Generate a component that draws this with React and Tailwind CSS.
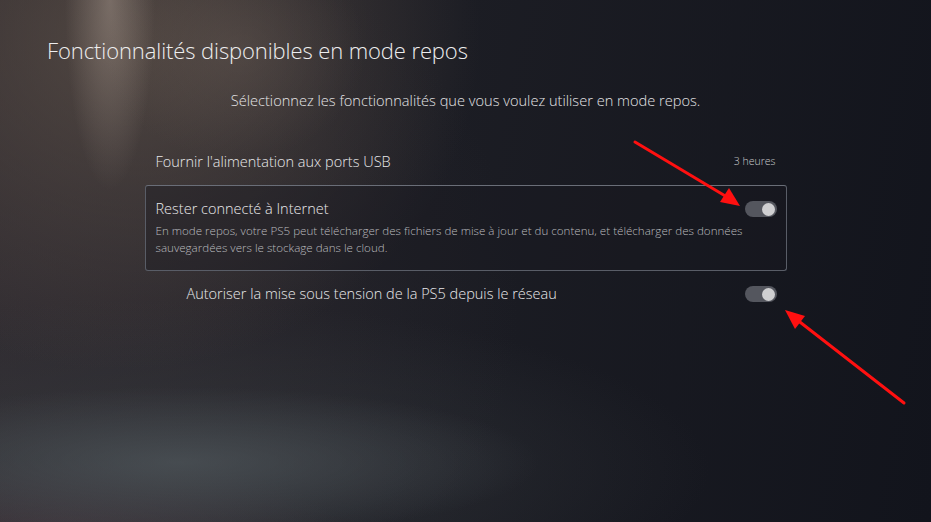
import React from "react";

function Toggle() {
  return (
    <div className="flex h-[16px] w-[32px] items-center justify-end rounded-full bg-[#54565e] pr-[2px]">
      <div className="h-[13px] w-[13px] rounded-full bg-[#cfcfd1]" />
    </div>
  );
}

export default function App() {
  return (
    <div
      className="relative h-[522px] w-[931px] overflow-hidden bg-[#13151d] text-[#e8e8ea] [font-family:'Open_Sans','Noto_Sans',sans-serif] bg-[radial-gradient(ellipse_45px_190px_at_110px_0px,rgba(165,150,140,0.5),transparent),radial-gradient(ellipse_130px_110px_at_235px_50px,rgba(110,96,88,0.35),transparent),radial-gradient(ellipse_360px_330px_at_120px_40px,rgba(92,80,72,0.75),transparent),radial-gradient(ellipse_360px_75px_at_180px_462px,rgba(84,92,97,0.6),transparent),radial-gradient(ellipse_560px_170px_at_150px_470px,rgba(56,60,64,0.65),transparent),radial-gradient(ellipse_280px_70px_at_60px_528px,rgba(88,62,72,0.55),transparent),radial-gradient(ellipse_520px_420px_at_0px_300px,rgba(55,50,55,0.6),transparent),linear-gradient(100deg,#29252a_0%,#1c1d24_45%,#12141c_100%)]"
    >
      <h1 className="pl-[47px] pt-[36px] text-[22px] font-light leading-[28px] tracking-[-0.1px] text-[#eeeeef]">
        Fonctionnalités disponibles en mode repos
      </h1>

      <p className="mt-[26px] text-center text-[14.6px] font-light leading-[20px] text-[#e4e4e6]">
        Sélectionnez les fonctionnalités que vous voulez utiliser en mode repos.
      </p>

      <div className="mx-auto mt-[33px] w-[642px]">
        <div className="flex h-[38px] items-center justify-between pl-[11px] pr-[11px]">
          <span className="text-[14.5px] font-light">Fournir l'alimentation aux ports USB</span>
          <span className="text-[10.5px] font-light text-[#c9c9cc]">3 heures</span>
        </div>

        <div className="mt-[4px] h-[86px] rounded-[3px] border border-[#595d67] border-t-[#6a6e78] bg-[#191a21]/40 pl-[10px] pr-[9px] pt-[13px]">
          <div className="flex items-center justify-between">
            <span className="text-[14.5px] font-light leading-[20px]">Rester connecté à Internet</span>
            <Toggle />
          </div>
          <p className="mt-[3px] pr-[20px] text-[11.6px] font-light leading-[17px] text-[#b9babe]">
            En mode repos, votre PS5 peut télécharger des fichiers de mise à jour et du contenu, et télécharger des données sauvegardées vers le stockage dans le cloud.
          </p>
        </div>

        <div className="flex h-[46px] items-center justify-between pl-[42px] pr-[10px]">
          <span className="text-[14.5px] font-light">Autoriser la mise sous tension de la PS5 depuis le réseau</span>
          <Toggle />
        </div>
      </div>

      <svg className="pointer-events-none absolute inset-0" width="931" height="522" viewBox="0 0 931 522">
        <line x1="635" y1="142" x2="727" y2="197" stroke="#ff1010" strokeWidth="3" strokeLinecap="round" />
        <polygon points="740,206 720,202 729,188" fill="#ff1010" />
        <line x1="904" y1="403" x2="796" y2="319" stroke="#ff1010" strokeWidth="3" strokeLinecap="round" />
        <polygon points="785,310 805,316 795,329" fill="#ff1010" />
      </svg>
    </div>
  );
}
